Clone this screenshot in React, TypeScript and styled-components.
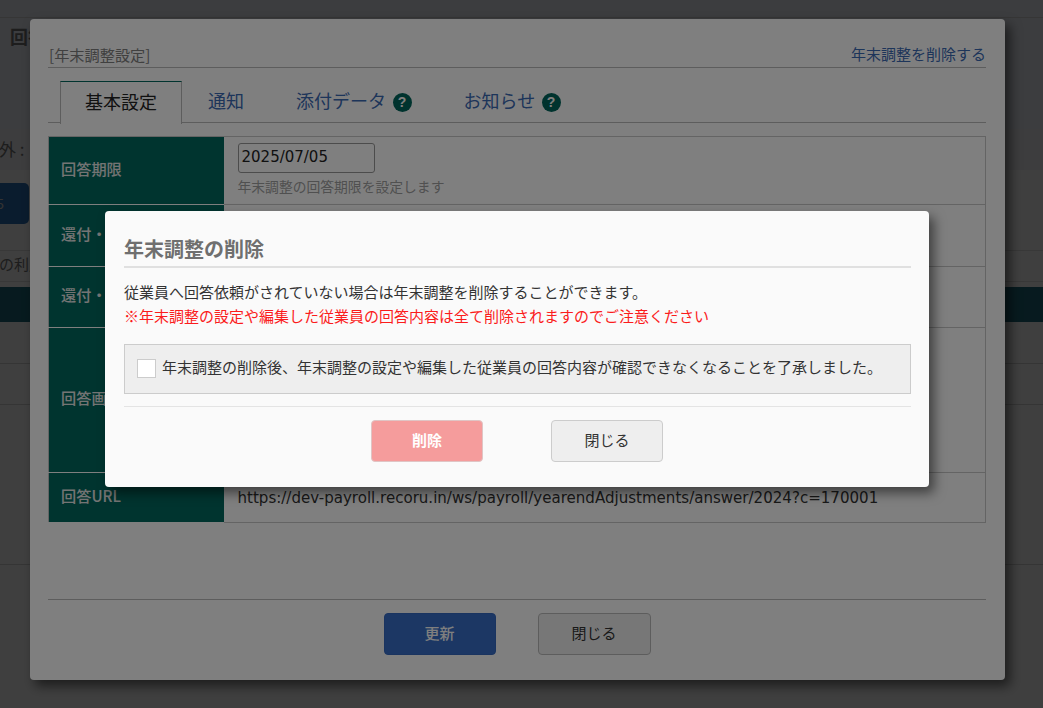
import React from "react";
import styled, { createGlobalStyle } from "styled-components";

const JP = `"Noto Sans CJK JP", "Noto Sans", sans-serif`;
const LATIN = `"DejaVu Sans", "Noto Sans CJK JP", sans-serif`;

const Global = createGlobalStyle`
  html, body { margin: 0; padding: 0; height: 100%; background: #fff; }
  * { box-sizing: border-box; }
  body { font-family: ${JP}; overflow: hidden; }
`;

const Page = styled.div`
  position: relative;
  width: 1043px;
  height: 708px;
  overflow: hidden;
  background: #fff;
  color: #666;
`;

const TopBar = styled.div`
  height: 18px;
  background: #f0f4fc;
  border-bottom: 1px solid #d8d8d8;
`;

const TitleBand = styled.div`
  height: 111px;
  padding: 4px 10px;
  background: #f0f4fc;
  font-size: 18px;
  font-weight: 700;
  line-height: 28px;
  color: #777;
`;

const FilterBand = styled.div`
  height: 41px;
  margin-left: -18px;
  padding: 7px 0 0;
  background: #f4f5f8;
  font-size: 17px;
  line-height: 26px;
  color: #777;
`;

const ActionBand = styled.div`
  height: 80px;
  padding-top: 13px;
  background: #fff;
`;

const OldButton = styled.div`
  width: 129px;
  height: 41px;
  margin-left: -100px;
  border-radius: 5px;
  background: #2a70b8;
  color: #ccc;
  font-size: 14px;
  line-height: 41px;
  text-align: right;
  padding-right: 25px;
`;

const Notice = styled.div`
  height: 32px;
  margin-left: -1px;
  border-top: 1px solid #e0e0e0;
  border-bottom: 1px solid #e0e0e0;
  font-size: 15px;
  line-height: 26px;
  color: #777;
`;

const GridHead = styled.div`
  height: 35px;
  margin-top: 5px;
  background: #1c6a7c;
`;

const GridRow = styled.div<{ $h: number }>`
  height: ${(p) => p.$h}px;
  background: #fff;
  border-bottom: 1px solid #d4d4d4;
`;

const PageBottom = styled.div`
  height: 160px;
  border-bottom: 1px solid #d4d4d4;
`;

const Overlay = styled.div`
  position: absolute;
  inset: 0;
  background: rgba(0, 0, 0, 0.5);
`;

const SettingsModal = styled.section`
  position: absolute;
  left: 30px;
  top: 19px;
  width: 975px;
  height: 661px;
  padding: 20px 19px 0 18px;
  display: flex;
  flex-direction: column;
  background: #fff;
  border-radius: 4px;
  box-shadow: 5px 6px 12px rgba(0, 0, 0, 0.55);
`;

const ModalHead = styled.header`
  height: 29px;
  display: flex;
  justify-content: space-between;
  align-items: center;
  border-bottom: 1px solid #bbb;
  padding: 1px 0 0 1px;
`;

const HeadTitle = styled.span`
  font-size: 15.2px;
  color: #808080;
`;

const DangerLink = styled.a`
  font-size: 15px;
  color: #3a6ab4;
  text-decoration: none;
`;

const Tabs = styled.nav`
  display: flex;
  height: 42px;
  margin-top: 13px;
  padding-left: 12px;
  border-bottom: 1px solid #bbb;
`;

const Tab = styled.a<{ $active?: boolean }>`
  display: flex;
  align-items: center;
  gap: 6.5px;
  height: ${(p) => (p.$active ? "43px" : "42px")};
  padding: ${(p) => (p.$active ? "0 24px 5px" : "0 26px 5px")};
  font-size: 18px;
  color: ${(p) => (p.$active ? "#222" : "#3a6ab4")};
  background: ${(p) => (p.$active ? "#fff" : "transparent")};
  border: ${(p) => (p.$active ? "1px solid #bbb" : "none")};
  border-top: ${(p) => (p.$active ? "1px solid #00685e" : "none")};
  border-bottom: none;
`;

const Help = styled.span`
  width: 19px;
  height: 19px;
  margin-top: 5px;
  border-radius: 50%;
  background: #00665c;
  color: #fff;
  font-family: "Liberation Sans", sans-serif;
  font-size: 14px;
  font-weight: 700;
  line-height: 19px;
  text-align: center;
`;

const Settings = styled.table`
  width: 938px;
  margin: 13px 0 0;
  border-collapse: collapse;
  table-layout: fixed;
  border: 1px solid #c8c8c8;
`;

const Row = styled.tr<{ $h: number }>`
  height: ${(p) => p.$h}px;
`;

const Label = styled.th`
  width: 175px;
  padding: 0 12px 6px;
  background: #00685e;
  border-bottom: 1px solid #fff;
  color: #e8e8e8;
  font-size: 15.2px;
  font-weight: 500;
  text-align: left;
  white-space: nowrap;
  overflow: hidden;
`;

const Cell = styled.td`
  padding: 6px 14px;
  border-bottom: 1px solid #c8c8c8;
  vertical-align: top;
`;

const UrlCell = styled(Cell)`
  padding-top: 15px;
  font-family: ${LATIN};
  font-size: 15.05px;
  line-height: 20px;
  color: #333;
`;

const DateInput = styled.div`
  width: 137px;
  height: 30px;
  padding-left: 3px;
  border: 1px solid #999;
  border-radius: 3px;
  font-family: ${LATIN};
  font-size: 15px;
  line-height: 27px;
  color: #222;
`;

const Hint = styled.p`
  margin: 4px 0 0;
  font-size: 13.8px;
  line-height: 18px;
  color: #a0a0a0;
`;

const ModalFoot = styled.footer`
  margin-top: auto;
  height: 81px;
  padding: 13px 0 0 0;
  display: flex;
  justify-content: center;
  gap: 42px;
  border-top: 1px solid #bbb;
`;

const FootButton = styled.button<{ $primary?: boolean }>`
  width: ${(p) => (p.$primary ? "112px" : "113px")};
  height: 42px;
  padding: 0 0 3px;
  border-radius: 4px;
  border: 1px solid ${(p) => (p.$primary ? "#3569c0" : "#bbb")};
  background: ${(p) => (p.$primary ? "#386fc9" : "#efefef")};
  color: ${(p) => (p.$primary ? "#fff" : "#333")};
  font-family: ${JP};
  font-size: 15px;
  font-weight: ${(p) => (p.$primary ? 500 : 400)};
`;

const ConfirmModal = styled.section`
  position: absolute;
  left: 105px;
  top: 211px;
  width: 824px;
  height: 276px;
  padding: 21px 18px 0 19px;
  background: #fafafa;
  border-radius: 4px;
  box-shadow: 5px 6px 12px rgba(0, 0, 0, 0.5);
`;

const ConfirmTitle = styled.h2`
  margin: 0;
  height: 36px;
  border-bottom: 2px solid #e0e0e0;
  font-size: 20px;
  font-weight: 700;
  line-height: 34px;
  color: #6f6f6f;
`;

const Lead = styled.p`
  margin: 12px 0 0;
  font-size: 15px;
  line-height: 23px;
  color: #333;
`;

const Warning = styled.p`
  margin: 1px 0 0;
  font-size: 15px;
  line-height: 23px;
  color: #fb1c1c;
`;

const AckBox = styled.label`
  height: 50px;
  margin-top: 17px;
  padding: 0 0 2px 12px;
  display: flex;
  align-items: center;
  gap: 6px;
  background: #eee;
  border: 1px solid #ccc;
`;

const AckText = styled.span`
  padding-bottom: 3px;
  font-size: 15px;
  color: #333;
`;

const Tick = styled.span`
  width: 19px;
  height: 19px;
  background: #fff;
  border: 1px solid #ccc;
`;

const Actions = styled.div`
  margin-top: 12px;
  padding: 13px 1px 0 0;
  display: flex;
  justify-content: center;
  gap: 68px;
  border-top: 1px solid #e4e4e4;
`;

const ConfirmButton = styled.button<{ $danger?: boolean }>`
  width: 112px;
  height: 42px;
  padding: 0 0 3px;
  border-radius: 4px;
  border: 1px solid ${(p) => (p.$danger ? "#e0c4c4" : "#ccc")};
  background: ${(p) => (p.$danger ? "#f59c9c" : "#eee")};
  color: ${(p) => (p.$danger ? "#fff" : "#333")};
  font-family: ${JP};
  font-size: 15px;
  font-weight: ${(p) => (p.$danger ? 700 : 400)};
`;

export default function App() {
  return (
    <Page>
      <Global />
      <TopBar />
      <TitleBand>回答</TitleBand>
      <FilterBand>除外 :</FilterBand>
      <ActionBand>
        <OldButton>5</OldButton>
      </ActionBand>
      <Notice>の利用</Notice>
      <GridHead />
      <GridRow $h={42} />
      <GridRow $h={41} />
      <PageBottom />
      <Overlay />
      <SettingsModal>
        <ModalHead>
          <HeadTitle>[年末調整設定]</HeadTitle>
          <DangerLink>年末調整を削除する</DangerLink>
        </ModalHead>
        <Tabs>
          <Tab $active>基本設定</Tab>
          <Tab>通知</Tab>
          <Tab>
            添付データ<Help>?</Help>
          </Tab>
          <Tab>
            お知らせ<Help>?</Help>
          </Tab>
        </Tabs>
        <Settings>
          <tbody>
            <Row $h={68}>
              <Label>回答期限</Label>
              <Cell>
                <DateInput>2025/07/05</DateInput>
                <Hint>年末調整の回答期限を設定します</Hint>
              </Cell>
            </Row>
            <Row $h={62}>
              <Label>還付・徴収</Label>
              <Cell />
            </Row>
            <Row $h={61}>
              <Label>還付・徴収</Label>
              <Cell />
            </Row>
            <Row $h={145}>
              <Label>回答画面</Label>
              <Cell />
            </Row>
            <Row $h={50}>
              <Label>回答URL</Label>
              <UrlCell>https://dev-payroll.recoru.in/ws/payroll/yearendAdjustments/answer/2024?c=170001</UrlCell>
            </Row>
          </tbody>
        </Settings>
        <ModalFoot>
          <FootButton $primary>更新</FootButton>
          <FootButton>閉じる</FootButton>
        </ModalFoot>
      </SettingsModal>
      <Overlay />
      <ConfirmModal>
        <ConfirmTitle>年末調整の削除</ConfirmTitle>
        <Lead>従業員へ回答依頼がされていない場合は年末調整を削除することができます。</Lead>
        <Warning>※年末調整の設定や編集した従業員の回答内容は全て削除されますのでご注意ください</Warning>
        <AckBox>
          <Tick />
          <AckText>年末調整の削除後、年末調整の設定や編集した従業員の回答内容が確認できなくなることを了承しました。</AckText>
        </AckBox>
        <Actions>
          <ConfirmButton $danger>削除</ConfirmButton>
          <ConfirmButton>閉じる</ConfirmButton>
        </Actions>
      </ConfirmModal>
    </Page>
  );
}
